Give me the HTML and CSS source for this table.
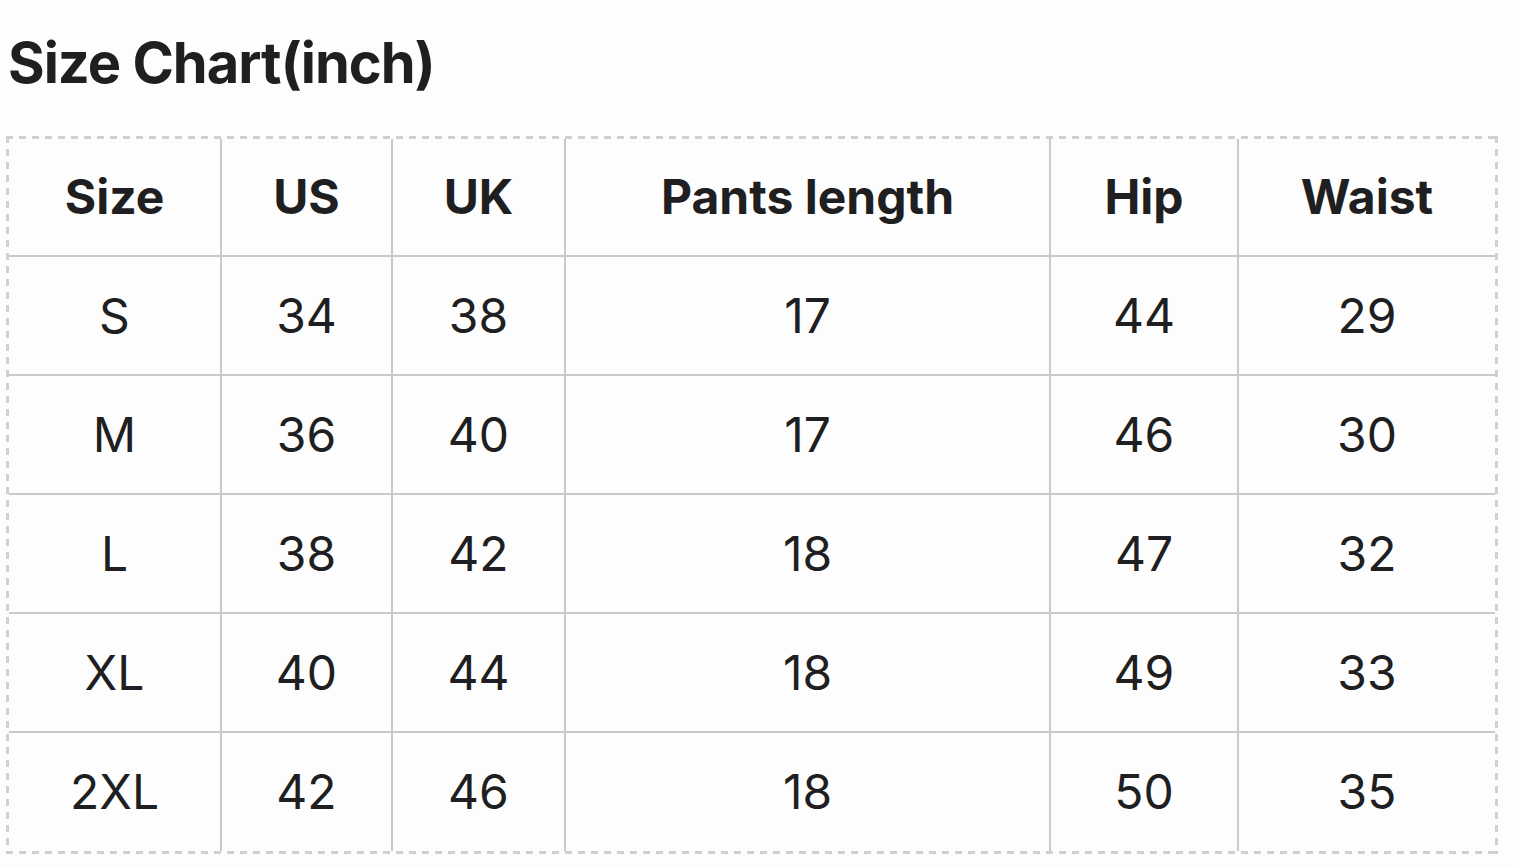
FILE: index.html
```html
<!DOCTYPE html>
<html lang="en">
<head>
<meta charset="utf-8">
<title>Size Chart</title>
<link rel="stylesheet" href="styles.css">
</head>
<body>
<div class="page">
  <h1 class="title">Size Chart(inch)</h1>
  <div class="chart">
    <div class="cell head">Size</div>
    <div class="cell head">US</div>
    <div class="cell head">UK</div>
    <div class="cell head">Pants length</div>
    <div class="cell head">Hip</div>
    <div class="cell head last">Waist</div>

    <div class="cell">S</div>
    <div class="cell">34</div>
    <div class="cell">38</div>
    <div class="cell">17</div>
    <div class="cell">44</div>
    <div class="cell last">29</div>

    <div class="cell">M</div>
    <div class="cell">36</div>
    <div class="cell">40</div>
    <div class="cell">17</div>
    <div class="cell">46</div>
    <div class="cell last">30</div>

    <div class="cell">L</div>
    <div class="cell">38</div>
    <div class="cell">42</div>
    <div class="cell">18</div>
    <div class="cell">47</div>
    <div class="cell last">32</div>

    <div class="cell">XL</div>
    <div class="cell">40</div>
    <div class="cell">44</div>
    <div class="cell">18</div>
    <div class="cell">49</div>
    <div class="cell last">33</div>

    <div class="cell bottom">2XL</div>
    <div class="cell bottom">42</div>
    <div class="cell bottom">46</div>
    <div class="cell bottom">18</div>
    <div class="cell bottom">50</div>
    <div class="cell bottom last">35</div>
  </div>
</div>
</body>
</html>
```

FILE: styles.css
```css
html, body {
  margin: 0;
  padding: 0;
  background: #fdfdfd;
}
body {
  font-family: Inter, "Liberation Sans", sans-serif;
  color: #1f1f21;
}
.page {
  padding: 31px 0 0 6px;
}
.title {
  margin: 0 0 41px 2px;
  font-size: 56px;
  line-height: 64px;
  font-weight: 700;
  letter-spacing: -1px;
}
.chart {
  width: 1492px;
  box-sizing: border-box;
  padding: 3px;
  background:
    repeating-linear-gradient(90deg, #d0d0d0 0 7px, transparent 7px 13px) left top / 100% 3px no-repeat,
    repeating-linear-gradient(90deg, #d0d0d0 0 7px, transparent 7px 13px) left bottom / 100% 3px no-repeat,
    repeating-linear-gradient(180deg, #d0d0d0 0 7px, transparent 7px 13px) left top / 3px 100% no-repeat,
    repeating-linear-gradient(180deg, #d0d0d0 0 7px, transparent 7px 13px) right top / 3px 100% no-repeat;
  display: grid;
  grid-template-columns: 213px 171px 173px 485px 188px 1fr;
  grid-template-rows: 118px 119px 119px 119px 119px 118px;
}
.cell {
  box-sizing: border-box;
  border-right: 2px solid #c9c9c9;
  border-bottom: 2px solid #c9c9c9;
  display: flex;
  align-items: center;
  justify-content: center;
  font-size: 48px;
  font-weight: 400;
  padding-bottom: 1px;
}
.cell.head {
  font-weight: 700;
}
.cell.last {
  border-right: none;
}
.cell.bottom {
  border-bottom: none;
}
```
